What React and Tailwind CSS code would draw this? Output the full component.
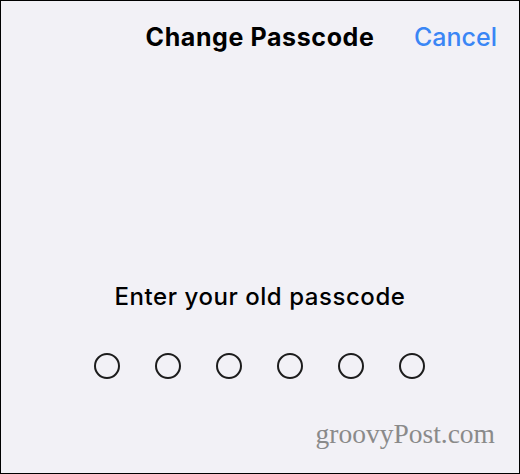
export default function App() {
  const dots = [0, 1, 2, 3, 4, 5]
  return (
    <div className="w-[520px] h-[474px] border border-black bg-[#f2f1f6] flex flex-col font-['Inter',sans-serif] overflow-hidden">
      <div className="relative h-[72px] flex justify-center pt-[21px]">
        <div className="text-[25px] leading-[30px] font-bold text-black tracking-[0.6px]">Change Passcode</div>
        <div className="absolute right-[22px] top-[21px] text-[25px] leading-[30px] font-medium text-[#3a86f5]">Cancel</div>
      </div>
      <div className="flex flex-col items-center mt-[209px]">
        <div className="text-[24px] leading-[30px] font-medium text-black tracking-[0.55px]">Enter your old passcode</div>
        <div className="flex gap-[35px] mt-[41px] ml-[-2px]">
          {dots.map(i => (
            <div key={i} className="w-[26px] h-[26px] rounded-full border-2 border-[#1c1c1c]" />
          ))}
        </div>
      </div>
      <div className="flex justify-end pr-[24px] mt-[39px]">
        <div className="text-[27.5px] leading-[32px] text-[#8a8a8a] font-['Liberation_Serif',serif]">groovyPost.com</div>
      </div>
    </div>
  )
}
